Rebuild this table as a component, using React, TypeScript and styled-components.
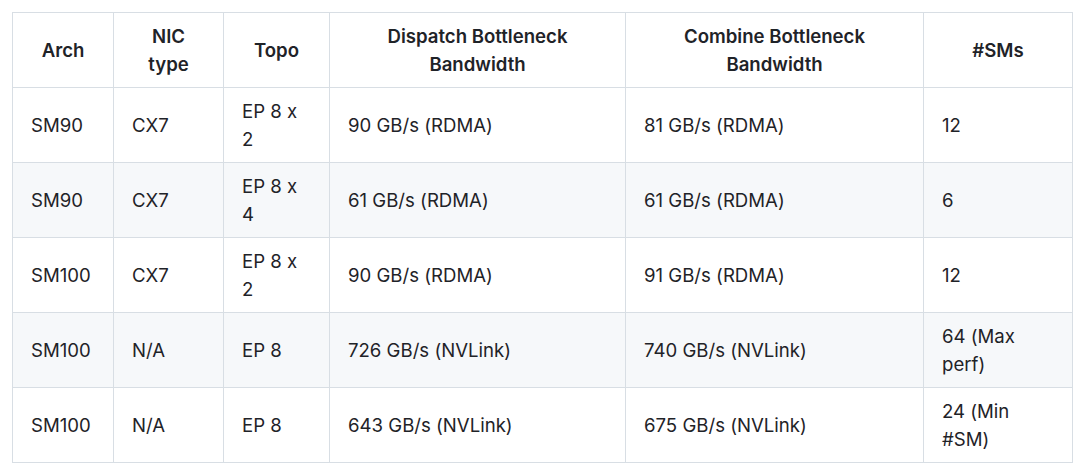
import React from "react";
import styled, { createGlobalStyle } from "styled-components";

const Global = createGlobalStyle`
  html, body { margin: 0; padding: 0; background: #ffffff; }
  body {
    font-family: Inter, "Liberation Sans", Arial, sans-serif;
    font-feature-settings: "calt" 0;
    color: #1f2328;
  }
`;

const Page = styled.div`
  padding: 12px 8px 0 12px;
`;

const Table = styled.table`
  border-collapse: collapse;
  border-spacing: 0;
  table-layout: fixed;
  width: 1060px;
  font-size: 18.6px;
  line-height: 28px;
`;

const HeadCell = styled.th`
  border: 1px solid #d8dee4;
  font-weight: 600;
  text-align: center;
  padding: 9px 18px;
  height: 56px;
`;

const Row = styled.tr<{ $alt: boolean }>`
  background: ${(p) => (p.$alt ? "#f6f8fa" : "#ffffff")};
`;

const Cell = styled.td`
  border: 1px solid #d8dee4;
  text-align: left;
  vertical-align: middle;
  padding: 9px 18px;
  height: 56px;
`;

const widths = [101, 110, 106, 296, 298, 149];
const headers = [
  "Arch",
  "NIC type",
  "Topo",
  "Dispatch Bottleneck Bandwidth",
  "Combine Bottleneck Bandwidth",
  "#SMs",
];

const rows = [
  ["SM90", "CX7", "EP 8 x 2", "90 GB/s (RDMA)", "81 GB/s (RDMA)", "12"],
  ["SM90", "CX7", "EP 8 x 4", "61 GB/s (RDMA)", "61 GB/s (RDMA)", "6"],
  ["SM100", "CX7", "EP 8 x 2", "90 GB/s (RDMA)", "91 GB/s (RDMA)", "12"],
  ["SM100", "N/A", "EP 8", "726 GB/s (NVLink)", "740 GB/s (NVLink)", "64 (Max perf)"],
  ["SM100", "N/A", "EP 8", "643 GB/s (NVLink)", "675 GB/s (NVLink)", "24 (Min #SM)"],
];

export default function App() {
  return (
    <>
      <Global />
      <Page>
        <Table>
          <colgroup>
            {widths.map((w, i) => (
              <col key={i} style={{ width: w }} />
            ))}
          </colgroup>
          <thead>
            <tr>
              {headers.map((h) => (
                <HeadCell key={h}>{h}</HeadCell>
              ))}
            </tr>
          </thead>
          <tbody>
            {rows.map((r, i) => (
              <Row key={i} $alt={i % 2 === 1}>
                {r.map((c, j) => (
                  <Cell key={j}>{c}</Cell>
                ))}
              </Row>
            ))}
          </tbody>
        </Table>
      </Page>
    </>
  );
}
